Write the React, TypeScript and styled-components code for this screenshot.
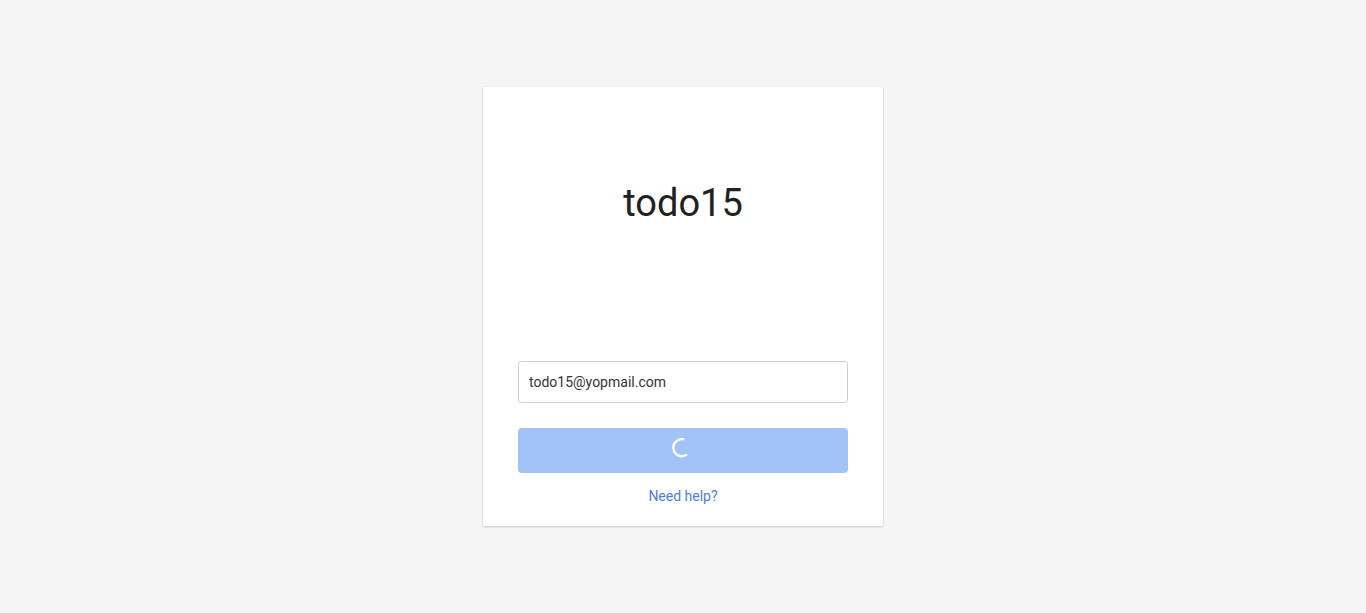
import React from 'react'
import styled, { createGlobalStyle } from 'styled-components'

const GlobalStyle = createGlobalStyle`
    html, body {
        margin: 0;
        padding: 0;
        background-color: #f5f5f5;
        font-family: Roboto, "Liberation Sans", Arial, sans-serif;
    }
`

const Page = styled.div`
    min-height: 613px;
    display: flex;
    justify-content: center;
    align-items: flex-start;
    padding-top: 87px;
    box-sizing: border-box;
`

const Card = styled.div`
    width: 400px;
    background-color: #fff;
    box-shadow: 0 1px 2px rgba(0, 0, 0, 0.18), 0 0 1px rgba(0, 0, 0, 0.08);
    padding: 0 35px 22px;
    box-sizing: border-box;
    display: flex;
    flex-direction: column;
`

const Title = styled.h1`
    margin: 93px 0 0;
    height: 46px;
    line-height: 46px;
    font-size: 38px;
    font-weight: 400;
    color: #212121;
    text-align: center;
`

const Form = styled.form`
    margin-top: 135px;
    display: flex;
    flex-direction: column;
`

const Input = styled.input`
    height: 42px;
    box-sizing: border-box;
    border: 1px solid #cfcfcf;
    border-radius: 3px;
    padding: 0 10px;
    font-family: inherit;
    font-size: 14px;
    color: #333;
    outline: none;
`

const SubmitButton = styled.button`
    margin-top: 25px;
    height: 45px;
    padding: 0;
    border: none;
    border-radius: 4px;
    background-color: #a1c3f7;
    display: flex;
    align-items: center;
    justify-content: center;
    cursor: default;
`

const Spinner = styled.svg`
    width: 24px;
    height: 24px;
    margin: 0 4px 6px 0;
`

const HelpLink = styled.a`
    margin-top: 15px;
    align-self: center;
    font-size: 14px;
    line-height: 16px;
    color: #4b7edf;
    text-decoration: none;
`

export default function App() {
    return (
        <>
            <GlobalStyle />
            <Page>
                <Card>
                    <Title>todo15</Title>
                    <Form onSubmit={e => e.preventDefault()}>
                        <Input type="email" defaultValue="todo15@yopmail.com" />
                        <SubmitButton type="submit" disabled>
                            {/* loading arc, open on the right */}
                            <Spinner viewBox="0 0 24 24">
                                <path
                                    d="M14.3 3.3 A8.5 8.5 0 1 0 17.2 19"
                                    fill="none"
                                    stroke="#fff"
                                    strokeWidth="2.4"
                                    strokeLinecap="round"
                                />
                            </Spinner>
                        </SubmitButton>
                        <HelpLink href="#">Need help?</HelpLink>
                    </Form>
                </Card>
            </Page>
        </>
    )
}
